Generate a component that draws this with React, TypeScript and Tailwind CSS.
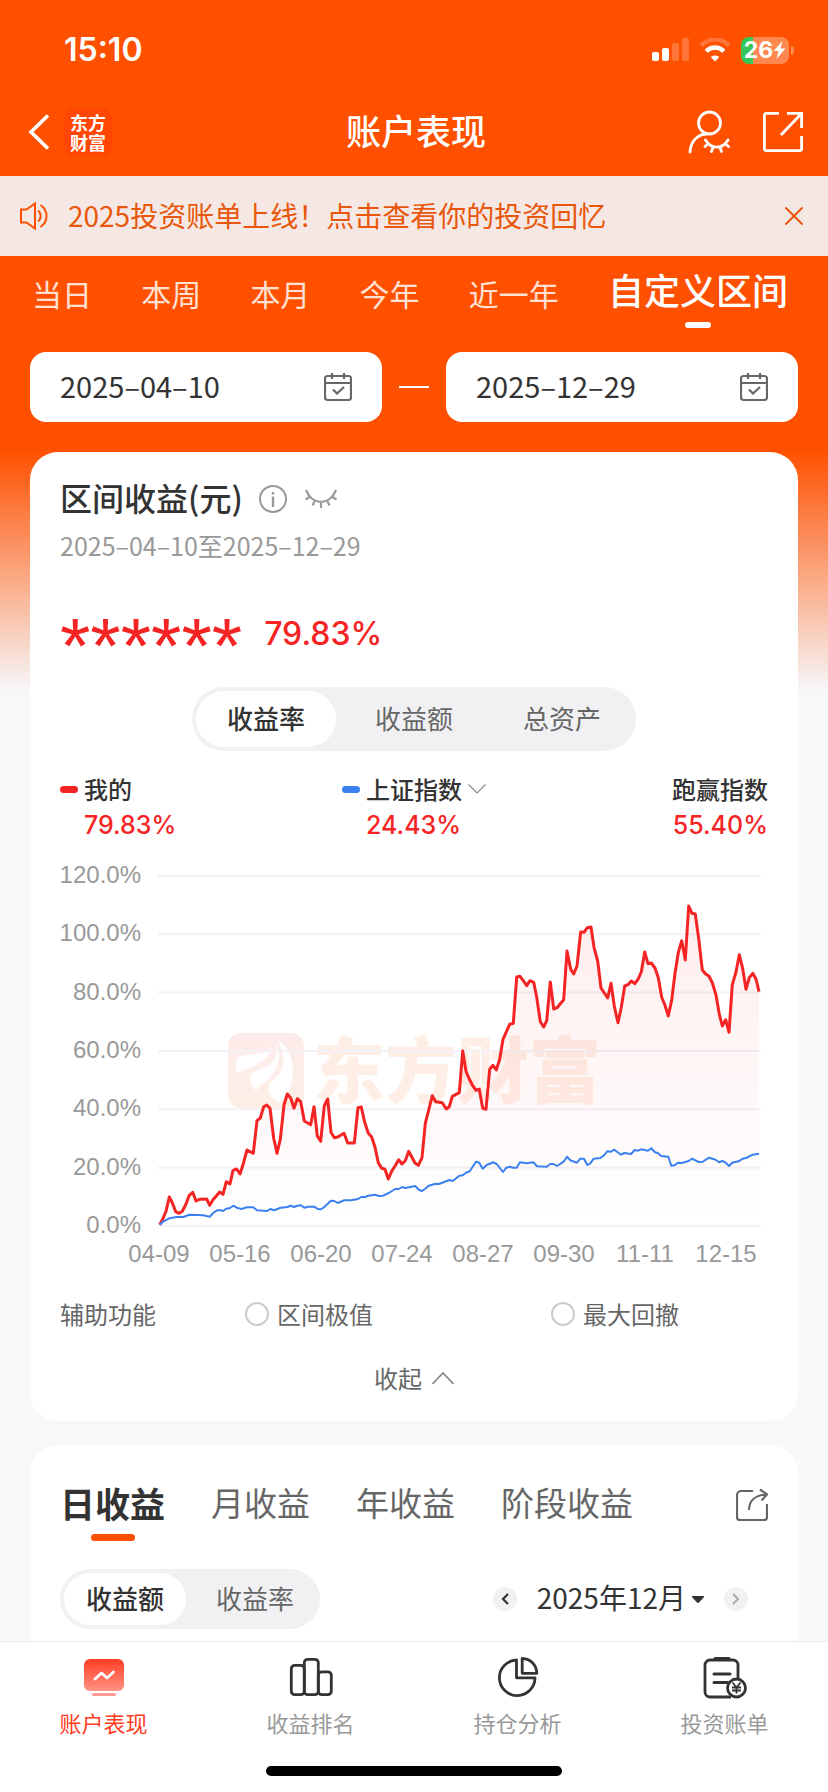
import React, { useState } from "react";

type Point = [number, number];

// Plotted at three units per pixel, measured from 20px left of the chart
const MINE: Point[] = [
  [359, 1094], [368, 1078], [378, 1054], [388, 1011], [397, 1028], [407, 1055], [417, 1060], [427, 1054],
  [437, 1034], [448, 1006], [458, 997], [468, 1023], [478, 1018], [500, 1017], [509, 1036], [519, 1019],
  [539, 996], [549, 1003], [559, 965], [570, 972], [579, 931], [590, 927], [600, 942], [610, 911],
  [621, 870], [640, 880], [651, 782], [661, 774], [671, 740], [680, 735], [690, 745], [701, 835],
  [711, 880], [721, 838], [732, 735], [742, 702], [752, 714], [762, 745], [772, 716], [782, 725],
  [793, 783], [812, 794], [822, 740], [832, 828], [842, 844], [853, 737], [863, 717], [873, 817],
  [883, 833], [893, 831], [912, 820], [923, 849], [943, 849], [954, 743], [964, 741], [974, 787],
  [985, 820], [995, 831], [1005, 862], [1015, 908], [1025, 925], [1035, 928], [1045, 957], [1056, 932],
  [1065, 918], [1076, 899], [1086, 912], [1096, 902], [1106, 874], [1125, 909], [1135, 916], [1146, 893],
  [1156, 790], [1166, 750], [1177, 707], [1187, 725], [1207, 728], [1219, 747], [1228, 740], [1237, 709],
  [1258, 698], [1268, 573], [1278, 634], [1288, 657], [1298, 677], [1308, 691], [1318, 688], [1328, 745],
  [1338, 748], [1349, 628], [1359, 616], [1369, 630], [1379, 598], [1389, 538], [1409, 493], [1420, 490],
  [1430, 351], [1440, 349], [1450, 362], [1460, 377], [1470, 362], [1481, 367], [1490, 412], [1501, 485],
  [1511, 501], [1520, 482], [1531, 366], [1541, 447], [1551, 443], [1571, 419], [1581, 273], [1592, 328],
  [1601, 342], [1611, 318], [1622, 216], [1632, 217], [1642, 203], [1653, 201], [1662, 262], [1673, 303],
  [1683, 384], [1703, 414], [1713, 370], [1723, 438], [1734, 488], [1744, 442], [1754, 378], [1764, 374],
  [1774, 363], [1784, 371], [1794, 358], [1804, 336], [1814, 276], [1824, 311], [1834, 309], [1845, 324],
  [1855, 353], [1865, 412], [1875, 436], [1885, 468], [1895, 420], [1905, 340], [1915, 278], [1925, 242],
  [1936, 300], [1946, 138], [1956, 160], [1966, 162], [1976, 236], [1987, 330], [1997, 342], [2007, 349],
  [2017, 368], [2028, 405], [2038, 462], [2047, 498], [2057, 479], [2067, 517], [2077, 374], [2088, 336],
  [2098, 284], [2108, 326], [2118, 388], [2128, 353], [2138, 340], [2148, 357], [2157, 395],
];

const INDEX: Point[] = [
  [359, 1094], [369, 1085], [388, 1075], [410, 1071], [430, 1071], [448, 1064], [490, 1066], [509, 1070],
  [519, 1060], [529, 1052], [539, 1050], [549, 1053], [559, 1046], [570, 1044], [580, 1037], [590, 1043],
  [605, 1047], [620, 1042], [640, 1042], [651, 1051], [681, 1053], [691, 1047], [702, 1051], [722, 1043],
  [742, 1041], [752, 1037], [762, 1041], [772, 1037], [783, 1036], [793, 1043], [803, 1040], [823, 1040],
  [833, 1047], [843, 1048], [853, 1041], [873, 1022], [883, 1023], [893, 1029], [913, 1021], [933, 1021],
  [954, 1017], [964, 1011], [975, 1011], [985, 1007], [1005, 1004], [1016, 1008], [1030, 1007], [1046, 999],
  [1066, 987], [1076, 987], [1086, 981], [1096, 984], [1126, 978], [1136, 989], [1146, 993], [1156, 986],
  [1166, 977], [1187, 971], [1197, 972], [1228, 960], [1238, 963], [1258, 947], [1268, 946], [1278, 938],
  [1289, 934], [1308, 905], [1318, 908], [1328, 926], [1340, 915], [1360, 907], [1370, 912], [1389, 936],
  [1399, 923], [1409, 920], [1419, 923], [1430, 923], [1440, 907], [1460, 910], [1480, 907], [1491, 919],
  [1520, 920], [1531, 912], [1541, 912], [1551, 918], [1571, 905], [1581, 890], [1591, 901], [1611, 908],
  [1621, 896], [1632, 896], [1642, 915], [1651, 910], [1661, 896], [1681, 894], [1691, 887], [1702, 874],
  [1713, 875], [1723, 869], [1743, 884], [1753, 879], [1773, 882], [1784, 870], [1794, 872], [1804, 868],
  [1824, 872], [1834, 865], [1844, 876], [1854, 880], [1864, 888], [1885, 890], [1894, 917], [1904, 916],
  [1914, 908], [1925, 909], [1946, 903], [1956, 896], [1976, 906], [1987, 906], [2007, 893], [2027, 899],
  [2037, 907], [2047, 903], [2057, 908], [2067, 918], [2077, 908], [2098, 903], [2108, 896], [2118, 894],
  [2138, 884], [2157, 881],
];

const Y_LABELS = ["120.0%", "100.0%", "80.0%", "60.0%", "40.0%", "20.0%", "0.0%"];
const X_LABELS = ["04-09", "05-16", "06-20", "07-24", "08-27", "09-30", "11-11", "12-15"];
const PERIODS = ["当日", "本周", "本月", "今年", "近一年", "自定义区间"];
const METRICS = ["收益率", "收益额", "总资产"];
const REPORTS = ["日收益", "月收益", "年收益", "阶段收益"];
const UNITS = ["收益额", "收益率"];

const toPoints = (pts: Point[]) =>
  pts.map(([x, y]) => `${(x / 3 - 20).toFixed(1)},${(y / 3).toFixed(1)}`).join(" ");

function StatusBar() {
  return (
    <div className="flex items-center justify-between h-[88px] pt-3 pl-16 pr-[34px] text-white">
      <span className="font-[Inter] text-[32px] font-semibold">15:10</span>
      <div className="flex items-center gap-[10px]">
        <svg width="37" height="24" viewBox="0 0 37 24" fill="currentColor">
          <rect x="0" y="14" width="7" height="9" rx="2" />
          <rect x="10" y="10" width="7" height="13" rx="2" />
          <rect x="20" y="5" width="7" height="18" rx="2" opacity=".22" />
          <rect x="30" y="0" width="7" height="23" rx="2" opacity=".22" />
        </svg>
        <svg width="32" height="24" viewBox="0 0 32 24" fill="none" stroke="currentColor" strokeWidth="4.4">
          <path d="M2 7.6C10-.4 22-.4 30 7.6" opacity=".22" />
          <path d="M7.2 13.2c5-4.9 12.600-4.900 17.600 0" />
          <path d="M16 23.500l-4.300-4.400c2.400-2.300 6.200-2.300 8.600 0z" fill="currentColor" stroke="none" />
        </svg>
        <div className="flex items-center gap-[2px]">
          <div className="flex items-center justify-center w-12 h-[27px] rounded-lg bg-[linear-gradient(90deg,#34c759_12px,#ff8850_12px)]">
            <span className="font-[Inter] text-[23px] leading-none font-bold">26</span>
            <svg width="13" height="18" viewBox="0 0 13 18" fill="currentColor">
              <path d="M9.500 0L.5 10h5L3.500 18 12.500 7.500h-5z" />
            </svg>
          </div>
          <span className="w-[3px] h-[9px] rounded-r-full bg-[#ff8850]" />
        </div>
      </div>
    </div>
  );
}

function TopBar() {
  return (
    <header className="grid grid-cols-[1fr_auto_1fr] items-center h-[88px] pl-7 pr-6 text-white">
      <div className="flex items-center gap-[14px]">
        <button aria-label="返回">
          <svg width="22" height="36" viewBox="0 0 22 36" fill="none" stroke="currentColor" strokeWidth="3.600">
            <path d="M20 1.500L3 18l17 16.500" />
          </svg>
        </button>
        <div className="flex items-center justify-center w-12 h-12 rounded-[10px] bg-[#ff4602]">
          <span className="w-[38px] text-center text-[18px] leading-5 font-bold">东方财富</span>
        </div>
      </div>
      <h1 className="pb-1 text-[35px] font-medium">账户表现</h1>
      <div className="flex items-center justify-end gap-[32px]">
        <button aria-label="隐私账户">
          <svg width="42" height="44" viewBox="0 0 42 44" fill="none" stroke="currentColor" strokeWidth="2.800" strokeLinecap="round">
            <circle cx="21.500" cy="13" r="11" />
            <path d="M2 42C2.500 31 10 24 19.500 24" />
            <path d="M17.500 30c5.500 9.500 17 9.500 22.500 0M20 34l-3 2.500M25 37.500l-1.500 4M32 37.500l1.500 4M37.500 34l3 2.500" />
          </svg>
        </button>
        <button aria-label="分享">
          <svg width="42" height="42" viewBox="0 0 42 42" fill="none" stroke="currentColor" strokeWidth="2.800">
            <path d="M17 2.400H4a1.600 1.600 0 0 0-1.600 1.600v34A1.600 1.600 0 0 0 4 39.600h34a1.600 1.600 0 0 0 1.600-1.600V25M25 2.400h14.600V17M39 3L19 24" />
          </svg>
        </button>
      </div>
    </header>
  );
}

function Banner({ onClose }: { onClose: () => void }) {
  return (
    <div className="flex items-center h-20 pl-5 pr-6 bg-[#f5e8e4] text-[#e8570b]">
      <svg width="30" height="30" viewBox="0 0 30 30" fill="none" stroke="#ff5000" strokeWidth="2">
        <path d="M1 8.500h5.500L15 2.500v25l-8.500-6H1z" />
        <path d="M18 9.500c3.500 2.500 3.500 8.500 0 11M20.500 4c8 5.500 8 16.500 0 22" />
      </svg>
      <a href="#bill" className="flex-1 pl-[18px] pb-[2px] text-[28px]">2025投资账单上线！点击查看你的投资回忆</a>
      <button aria-label="关闭" onClick={onClose}>
        <svg width="20" height="20" viewBox="0 0 20 20" fill="none" stroke="currentColor" strokeWidth="2">
          <path d="M1.500 1.500l17 17M18.500 1.500l-17 17" />
        </svg>
      </button>
    </div>
  );
}

function DateField({ label, value }: { label: string; value: string }) {
  return (
    <label className="flex flex-1 min-w-0 items-center h-[70px] px-[30px] rounded-2xl bg-white">
      <input aria-label={label} readOnly value={value} className="flex-1 min-w-0 pb-[2px] text-[29px] text-[#333] outline-none" />
      <svg width="28" height="30" viewBox="0 0 28 30" fill="none" stroke="#666" strokeWidth="2.200">
        <rect x="1" y="4" width="26" height="24" rx="2.500" />
        <path d="M1 11h26M8 1v6M20 1v6" />
        <path d="M9 17.500l4 4 7-6.500" />
      </svg>
    </label>
  );
}

function Segmented({ items, active, onPick, size }: { items: string[]; active: string; onPick: (v: string) => void; size: "md" | "lg" }) {
  return (
    <div className={`flex rounded-full bg-[#f1f1f4] ${size === "lg" ? "h-16" : "h-[60px]"}`}>
      {items.map((item) => (
        <button
          key={item}
          onClick={() => onPick(item)}
          className={`flex p-1 text-[26px] ${size === "lg" ? "w-[148px]" : "w-[130px]"}`}
        >
          <span
            className={`flex flex-1 h-full pb-1 items-center justify-center rounded-full ${
              item === active ? "bg-white font-medium text-[#333]" : "text-[#666]"
            }`}
          >
            {item}
          </span>
        </button>
      ))}
    </div>
  );
}

function ReturnChart() {
  const line = toPoints(MINE);
  return (
    <svg viewBox="0 0 708 410" className="block w-full" role="img" aria-label="收益率走势">
      <defs>
        <linearGradient id="fill" x1="0" y1="0" x2="0" y2="1">
          <stop offset="0" stopColor="#f52424" stopOpacity=".08" />
          <stop offset="1" stopColor="#f52424" stopOpacity="0" />
        </linearGradient>
        <linearGradient id="mark" x1="0" y1="0" x2="0" y2="1">
          <stop offset="0" stopColor="#fdebea" />
          <stop offset="1" stopColor="#feefe6" />
        </linearGradient>
      </defs>

      {/* Watermark */}
      <rect x="168" y="173" width="76" height="75" rx="13" fill="url(#mark)" />
      <path
        d="M213 180c0 18-18 12-32 16-5 2-6 10-5 17 15-6 35-9 37-33z M216 180c4 23-8 26-22 32-7 3-4 12 2 19 4-7 24-15 23-38z M218 180c8 18 7 32-5 40-6 5-8 14 6 23 5-4 14-14 14-33 0-12-6-24-15-30z"
        fill="#fff"
      />
      <text x="253" y="237" fontSize="72" fontWeight="900" fill="#feeee5">东方财富</text>

      {Y_LABELS.map((label, i) => (
        <g key={label}>
          <line x1="98" x2="701" y1={16 + i * 58.3} y2={16 + i * 58.3} stroke="#f1f1f7" strokeWidth="2" />
          <text x="81" y={23 + i * 58.3} textAnchor="end" fontSize="24" fill="#999" className="font-['Liberation_Sans']">
            {label}
          </text>
        </g>
      ))}
      {X_LABELS.map((label, i) => (
        <text key={label} x={99 + i * 81} y="402" textAnchor="middle" fontSize="24" fill="#999" className="font-['Liberation_Sans']">
          {label}
        </text>
      ))}

      <polygon points={`${line} 699,365 100,365`} fill="url(#fill)" />
      <polyline points={line} fill="none" stroke="#f52424" strokeWidth="3" strokeLinejoin="round" />
      <polyline points={toPoints(INDEX)} fill="none" stroke="#3a80f0" strokeWidth="2" strokeLinejoin="round" />
    </svg>
  );
}

function RangeCard() {
  const [metric, setMetric] = useState("收益率");
  return (
    <section className="mx-[30px] px-[30px] pt-6 pb-[18px] rounded-[28px] bg-white">
      <div className="flex items-center h-[46px]">
        <h2 className="pb-1 text-[32px] font-medium text-[#333]">区间收益(元)</h2>
        <button aria-label="说明" className="ml-4">
          <svg width="28" height="28" viewBox="0 0 28 28" fill="none" stroke="#999" strokeWidth="2">
            <circle cx="14" cy="14" r="13" />
            <path d="M14 11.500V22M14 7v2.500" strokeWidth="2.400" />
          </svg>
        </button>
        <button aria-label="隐藏金额" className="ml-[18px]">
          <svg width="32" height="20" viewBox="0 0 32 20" fill="none" stroke="#999" strokeWidth="2.200">
            <path d="M1 1c6 16 24 16 30 0M4.500 8L.5 10.500M9.500 12.500l-2 4M16 14v5M22.500 12.500l2 4M27.500 8l4 2.500" />
          </svg>
        </button>
      </div>
      <p className="mt-1 h-10 text-[25px] leading-[38px] text-[#999]">2025–04–10至2025–12–29</p>

      <div className="flex items-center h-[60px] mt-9 text-[#f52424]">
        <span className="h-12 font-['Liberation_Sans'] text-[78px] leading-[76px]">******</span>
        <span className="pt-1 ml-[22px] font-[Inter] text-[32px] font-medium">79.83%</span>
      </div>

      <div className="flex justify-center mt-[25px]">
        <Segmented items={METRICS} active={metric} onPick={setMetric} size="lg" />
      </div>

      <div className="grid grid-cols-3 mt-5 text-[24px] leading-9 text-[#333]">
        <div>
          <div className="flex items-center gap-[6px]">
            <span className="w-[18px] h-[7px] rounded-full bg-[#f52424]" />
            <span className="font-medium">我的</span>
          </div>
          <div className="pl-6 font-[Inter] text-[25px] font-medium text-[#f52424]">79.83%</div>
        </div>
        <div className="justify-self-center">
          <button className="flex items-center gap-[6px] font-medium">
            <span className="w-[18px] h-[7px] rounded-full bg-[#3a80f0]" />
            上证指数
            <svg width="18" height="12" viewBox="0 0 18 12" fill="none" stroke="#888" strokeWidth="1.200">
              <path d="M.5 1.500L9 10l8.500-8.500" />
            </svg>
          </button>
          <div className="pl-6 font-[Inter] text-[25px] font-medium text-[#f52424]">24.43%</div>
        </div>
        <div className="text-right font-medium">
          <div>跑赢指数</div>
          <div className="font-[Inter] text-[25px] text-[#f52424]">55.40%</div>
        </div>
      </div>

      <div className="mt-[17px]">
        <ReturnChart />
      </div>

      <div className="grid grid-cols-[185fr_306fr_217fr] items-center h-9 mt-[26px] text-[24px] text-[#666]">
        <span>辅助功能</span>
        {["区间极值", "最大回撤"].map((name) => (
          <label key={name} className="flex items-center gap-2">
            <input type="radio" name="helper" className="appearance-none w-6 h-6 rounded-full border-2 border-[#ccc] checked:border-[#ff5000] checked:border-8" />
            {name}
          </label>
        ))}
      </div>

      <button className="flex items-center gap-[10px] h-12 mx-auto mt-[22px] mb-px text-[24px] text-[#666]">
        收起
        <svg width="22" height="14" viewBox="0 0 22 14" fill="none" stroke="#888" strokeWidth="1.800">
          <path d="M.5 13L11 2l10.500 11" />
        </svg>
      </button>
    </section>
  );
}

function ReportCard() {
  const [report, setReport] = useState("日收益");
  const [unit, setUnit] = useState("收益额");
  return (
    <section className="flex-1 mx-[30px] mt-6 px-[30px] pt-7 pb-3 rounded-t-[28px] bg-white">
      <div className="flex items-center justify-between h-[68px]">
        <div className="flex items-center gap-[46px]">
          {REPORTS.map((name) => (
            <button
              key={name}
              onClick={() => setReport(name)}
              className={`relative h-[68px] pb-2 ${name === report ? "text-[35px] font-bold text-[#333]" : "text-[33px] text-[#666]"}`}
            >
              {name}
              {name === report && (
                <span className="absolute left-1/2 bottom-0 w-11 h-[7px] -translate-x-1/2 rounded-full bg-[#ff5000]" />
              )}
            </button>
          ))}
        </div>
        <button aria-label="分享收益" className="pb-1">
          <svg width="32" height="34" viewBox="0 0 32 34" fill="none" stroke="#666" strokeWidth="2.200">
            <path d="M17 3H5a4 4 0 0 0-4 4v22a3 3 0 0 0 3 3h24a3 3 0 0 0 3-3V16" />
            <path d="M13 22c0-9 6-15 18-15.500M24 1.500l7 5-5.500 6" />
          </svg>
        </button>
      </div>

      <div className="flex items-center justify-between mt-7 pr-5">
        <Segmented items={UNITS} active={unit} onPick={setUnit} size="md" />
        <div className="flex items-center">
          <button aria-label="上个月" className="flex items-center justify-center w-6 h-6 rounded-full bg-[#f1f1f4]">
            <svg width="8" height="12" viewBox="0 0 8 12" fill="none" stroke="#333" strokeWidth="2.200">
              <path d="M7 1L2 6l5 5" />
            </svg>
          </button>
          <button className="flex items-center gap-[6px] mx-5 text-[28px] text-[#333]">
            <span className="pb-1">2025年12月</span>
            <svg width="12" height="7" viewBox="0 0 12 7" fill="#333">
              <path d="M0 0h12v1L7.500 6a2 2 0 0 1-3 0L0 1z" />
            </svg>
          </button>
          <button aria-label="下个月" className="flex items-center justify-center w-6 h-6 rounded-full bg-[#f1f1f4]">
            <svg width="8" height="12" viewBox="0 0 8 12" fill="none" stroke="#aaa" strokeWidth="2">
              <path d="M1 1l5 5-5 5" />
            </svg>
          </button>
        </div>
      </div>
    </section>
  );
}

function TabIcon({ name }: { name: string }) {
  if (name === "账户表现") {
    return (
      <svg width="44" height="44" viewBox="0 0 44 44">
        <defs>
          <linearGradient id="screen" x1="0" y1="0" x2="0" y2="1">
            <stop offset="0" stopColor="#ff3d24" />
            <stop offset="1" stopColor="#ff9284" />
          </linearGradient>
        </defs>
        <rect x="2" y="3" width="40" height="32" rx="6" fill="url(#screen)" />
        <rect x="10" y="37" width="24" height="3" rx="1.500" fill="#ff9c90" />
        <path d="M13 23l6.500-6 5.500 5 6.500-6" fill="none" stroke="#fff" strokeWidth="2.800" strokeLinecap="round" strokeLinejoin="round" />
      </svg>
    );
  }
  if (name === "收益排名") {
    return (
      <svg width="44" height="44" viewBox="0 0 44 44" fill="none" stroke="#333" strokeWidth="2.800">
        <rect x="2.300" y="9.300" width="13" height="29.400" rx="3.500" />
        <rect x="15.300" y="3.300" width="14" height="35.400" rx="3.500" />
        <rect x="29.300" y="15.800" width="13" height="22.900" rx="3.500" />
      </svg>
    );
  }
  if (name === "持仓分析") {
    return (
      <svg width="44" height="44" viewBox="0 0 44 44" fill="none" stroke="#333" strokeWidth="2.800" strokeLinejoin="round">
        <path d="M20.500 4A17.800 17.800 0 1 0 39 21.800H20.500z" />
        <path d="M26.200 2.500v14.800h14.600C40.500 8.500 34.500 2.800 26.200 2.500z" />
      </svg>
    );
  }
  return (
    <svg width="46" height="44" viewBox="0 0 46 44" fill="none" stroke="#333" strokeWidth="2.800">
      <path d="M36 22V9a5 5 0 0 0-5-5H8a5 5 0 0 0-5 5v27a5 5 0 0 0 5 5h21" />
      <path d="M13 2.500h14M12 18h16M12 26.500h14" strokeLinecap="round" strokeWidth="3" />
      <circle cx="34.500" cy="32" r="9" fill="#fff" />
      <path d="M30.500 26.500l4 5 4-5M34.500 31.500v6M30 31.500h9M30 34.500h9" strokeWidth="1.800" />
    </svg>
  );
}

function BottomTabs() {
  return (
    <nav className="sticky bottom-0 border-t border-[#ebebed] bg-white">
      <div className="grid grid-cols-4 pt-[14px]">
        {["账户表现", "收益排名", "持仓分析", "投资账单"].map((name, i) => (
          <a
            key={name}
            href={`#tab-${i}`}
            className={`flex flex-col items-center gap-[6px] text-[22px] leading-8 ${i === 0 ? "text-[#ff3d24]" : "text-[#999]"}`}
          >
            <TabIcon name={name} />
            {name}
          </a>
        ))}
      </div>
      <div className="w-[296px] h-[10px] mx-auto mt-7 mb-4 rounded-full bg-black" />
    </nav>
  );
}

export default function App() {
  const [period, setPeriod] = useState("自定义区间");
  const [showBanner, setShowBanner] = useState(true);

  return (
    <div className="flex flex-col min-h-screen bg-[linear-gradient(#ff5000_0px,#ff5000_450px,#f6f8fa_692px)] font-['Noto_Sans_CJK_SC',sans-serif]">
      <StatusBar />
      <TopBar />
      {showBanner && <Banner onClose={() => setShowBanner(false)} />}

      {/* Period tabs */}
      <div className="flex items-end justify-between h-[72px] pl-8 pr-10 text-white">
        {PERIODS.map((name) => (
          <button
            key={name}
            onClick={() => setPeriod(name)}
            className={`relative h-[66px] leading-[44px] ${name === period ? "pb-3 text-[36px] font-medium" : "pb-1 text-[30px] text-[#ffe0d2]"}`}
          >
            {name}
            {name === period && (
              <span className="absolute left-1/2 bottom-0 w-[26px] h-[6px] -translate-x-1/2 rounded-full bg-white" />
            )}
          </button>
        ))}
      </div>

      {/* Date range */}
      <div className="flex items-center gap-[17px] mt-6 mb-[30px] px-[30px]">
        <DateField label="开始日期" value="2025–04–10" />
        <span className="w-[30px] h-[2px] bg-white" />
        <DateField label="结束日期" value="2025–12–29" />
      </div>

      <RangeCard />
      <ReportCard />
      <BottomTabs />
    </div>
  );
}
